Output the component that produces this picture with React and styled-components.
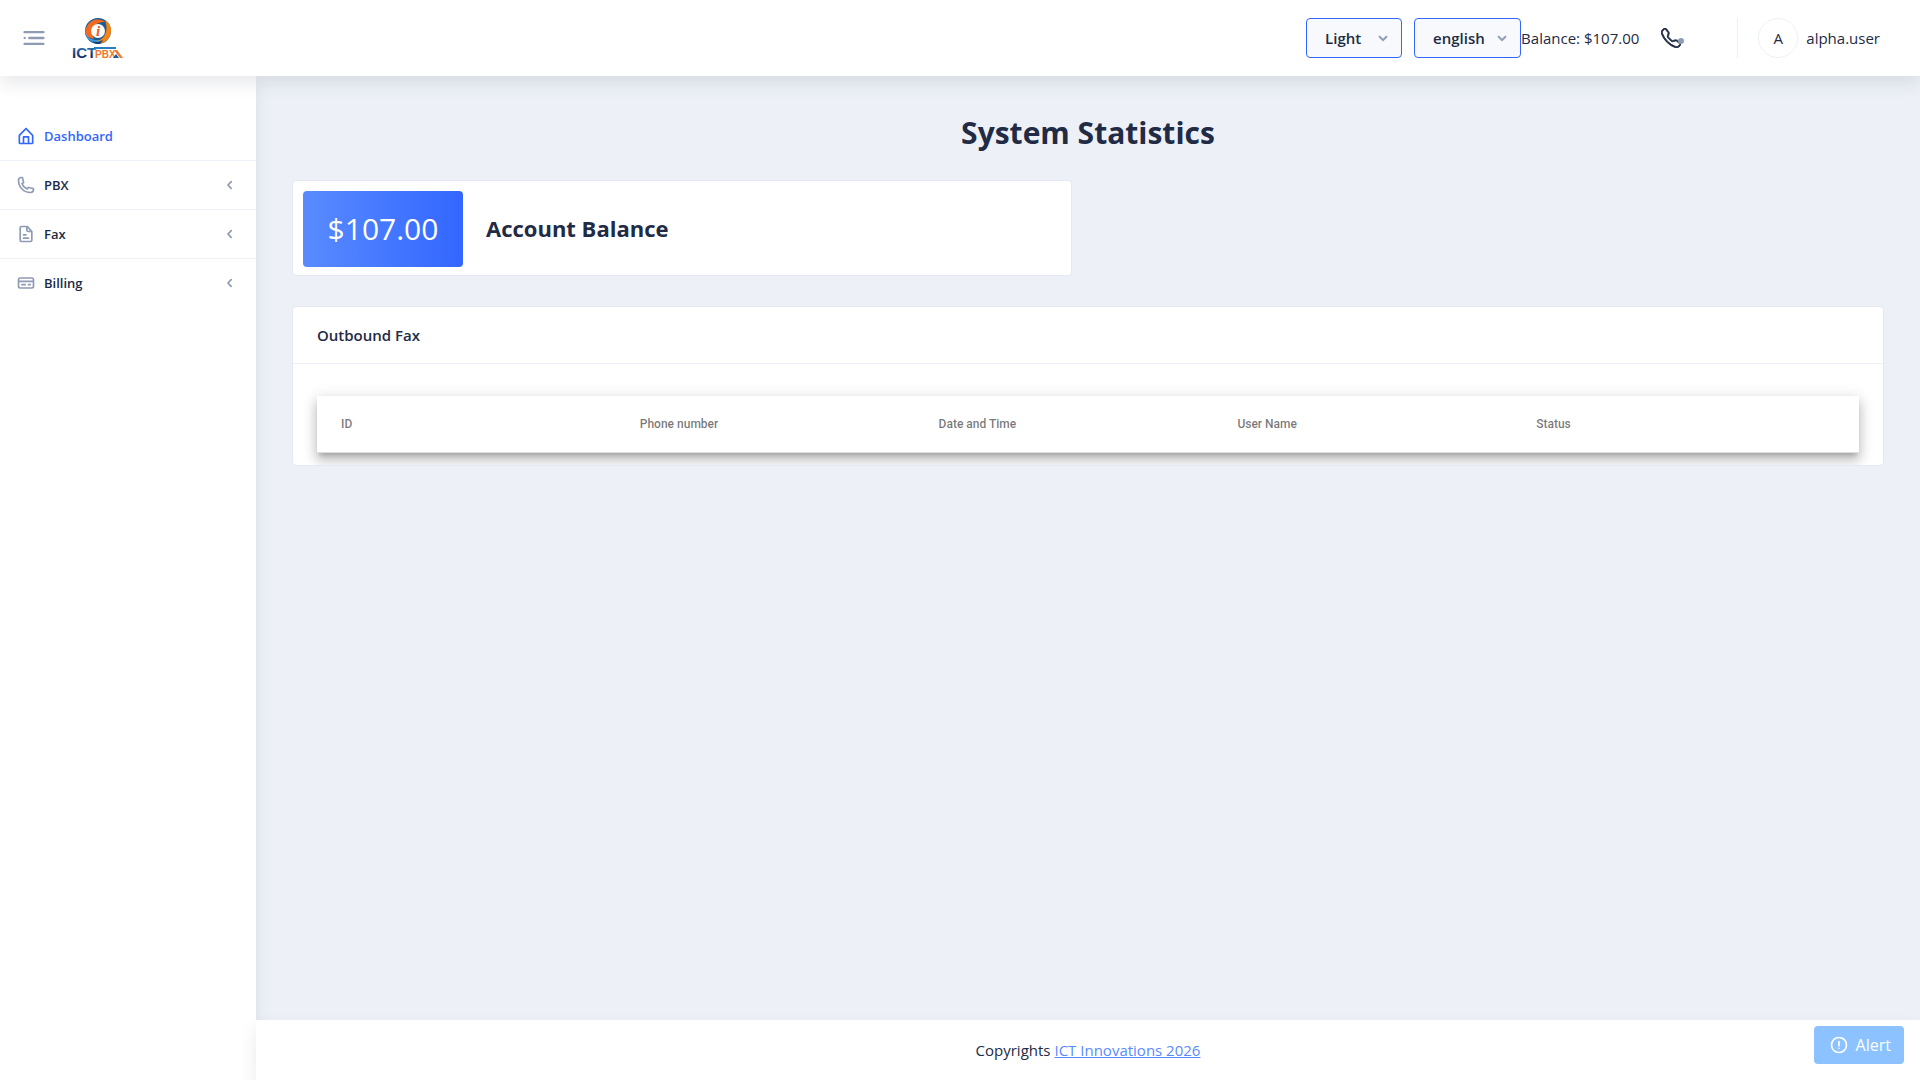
import React, { useState } from "react";
import styled, { createGlobalStyle } from "styled-components";
import { BsTelephone } from "react-icons/bs";

const GlobalStyle = createGlobalStyle`
  * {
    box-sizing: border-box;
  }
  body {
    margin: 0;
    background-color: #edf1f7;
    color: #222b45;
    font-family: "Open Sans", sans-serif;
    font-size: 15px;
    line-height: 24px;
  }
`;

const Layout = styled.div`
  min-height: 100vh;
  display: flex;
  flex-direction: column;
`;

const Header = styled.header`
  height: 76px;
  padding: 0 40px 0 20px;
  display: flex;
  align-items: center;
  justify-content: space-between;
  background-color: #ffffff;
  box-shadow: 0 8px 16px 0 rgba(44, 51, 73, 0.1);
  position: relative;
  z-index: 3;
`;

const HeaderGroup = styled.div`
  display: flex;
  align-items: center;
`;

const IconButton = styled.button`
  display: flex;
  align-items: center;
  padding: 0;
  border: none;
  background: none;
  color: ${(props) => props.$color || "#8f9bb3"};
  cursor: pointer;
  position: relative;
`;

const LogoLink = styled.a`
  display: flex;
  margin-left: 20px;
`;

const SelectWrapper = styled.label`
  display: flex;
  align-items: center;
  width: ${(props) => props.$width};
  margin-left: 12px;
  position: relative;
  svg {
    position: absolute;
    right: 9px;
    color: #8f9bb3;
    stroke: #8f9bb3;
    stroke-width: 0.6px;
    pointer-events: none;
  }
`;

const Select = styled.select`
  appearance: none;
  width: 100%;
  height: 40px;
  padding: 0 18px;
  border: 1px solid #3366ff;
  border-radius: 4px;
  background-color: #f7f9fc;
  color: #222b45;
  font-family: inherit;
  font-size: 15px;
  font-weight: 600;
  line-height: 24px;
`;

const PhoneButton = styled(IconButton)`
  margin-left: 22px;
  svg {
    stroke: #222b45;
    stroke-width: 0.6px;
  }
`;

const StatusDot = styled.span`
  width: 6px;
  height: 6px;
  border-radius: 50%;
  background-color: #8f9bb3;
  position: absolute;
  right: -3px;
  bottom: 4px;
`;

const User = styled.div`
  display: flex;
  align-items: center;
  gap: 8px;
  margin-left: 56px;
  padding-left: 20px;
  border-left: 1px solid #edf1f7;
`;

const Avatar = styled.div`
  width: 40px;
  height: 40px;
  display: flex;
  align-items: center;
  justify-content: center;
  border: 1px solid #edf1f7;
  border-radius: 50%;
`;

const Body = styled.div`
  flex: 1;
  display: flex;
`;

const Sidebar = styled.nav`
  width: 256px;
  flex-shrink: 0;
  padding-top: 36px;
  background-color: #ffffff;
  box-shadow: 0 8px 16px 0 rgba(44, 51, 73, 0.1);
`;

const MenuList = styled.ul`
  margin: 0;
  padding: 0;
  list-style: none;
`;

const MenuItem = styled.li`
  border-bottom: 1px solid #edf1f7;
  &:last-child {
    border-bottom: none;
  }
`;

const MenuLink = styled.a`
  height: 48px;
  padding: 0 16px;
  display: flex;
  align-items: center;
  gap: 8px;
  color: ${(props) => (props.$active ? "#3366ff" : "#222b45")};
  font-size: 13px;
  font-weight: 600;
  text-decoration: none;
  svg {
    color: ${(props) => (props.$active ? "#3366ff" : "#8f9bb3")};
  }
`;

const MenuTitle = styled.span`
  flex: 1;
`;

const Content = styled.div`
  flex: 1;
  display: flex;
  flex-direction: column;
`;

const Main = styled.main`
  flex: 1;
  padding: 36px 36px 32px;
`;

const PageTitle = styled.h3`
  margin: 0 0 26px;
  font-size: 30px;
  font-weight: 700;
  line-height: 42px;
  text-align: center;
`;

const CardGrid = styled.div`
  display: grid;
  grid-template-columns: 1fr 1fr;
  gap: 32px;
  margin-bottom: 30px;
`;

const Card = styled.section`
  border: 1px solid #e4e9f2;
  border-radius: 4px;
  background-color: #ffffff;
  overflow: hidden;
`;

const BalanceCard = styled(Card)`
  padding: 10px 10px 8px;
  display: flex;
  align-items: center;
  gap: 23px;
`;

const Amount = styled.div`
  width: 160px;
  height: 76px;
  display: flex;
  align-items: center;
  justify-content: center;
  border-radius: 4px;
  background-image: linear-gradient(to right, #598bff, #3366ff);
  color: #ffffff;
  font-size: 30px;
`;

const BalanceTitle = styled.h5`
  margin: 0;
  padding-bottom: 2px;
  font-size: 22px;
  font-weight: 700;
  line-height: 32px;
`;

const CardHeader = styled.header`
  padding: 16px 24px;
  border-bottom: 1px solid #edf1f7;
  font-weight: 600;
`;

const CardBody = styled.div`
  padding: 32px 24px 12px;
`;

const TableWrapper = styled.div`
  padding: 0 24px;
  border-bottom: 1px solid rgba(0, 0, 0, 0.12);
  background-color: #ffffff;
  box-shadow: 0 5px 5px -3px rgba(0, 0, 0, 0.2),
    0 8px 10px 1px rgba(0, 0, 0, 0.14), 0 3px 14px 2px rgba(0, 0, 0, 0.12);
`;

const Table = styled.table`
  width: 100%;
  table-layout: fixed;
  border-collapse: collapse;
`;

const HeadCell = styled.th`
  height: 56px;
  padding: 0;
  color: rgba(0, 0, 0, 0.54);
  font-family: Roboto, sans-serif;
  font-size: 12px;
  font-weight: 500;
  text-align: left;
`;

const Footer = styled.footer`
  height: 60px;
  display: flex;
  align-items: center;
  justify-content: center;
  gap: 4px;
  background-color: #ffffff;
  box-shadow: 0 8px 16px 0 rgba(44, 51, 73, 0.1);
`;

const FooterLink = styled.a`
  color: #598bff;
`;

const AlertButton = styled.button`
  height: 38px;
  padding: 0 13px 0 15px;
  display: flex;
  align-items: center;
  gap: 7px;
  border: none;
  border-radius: 4px;
  background-color: #8bc2ff;
  color: #ffffff;
  font-family: inherit;
  font-size: 16px;
  position: fixed;
  right: 16px;
  bottom: 16px;
  z-index: 4;
`;

const iconPaths = {
  home: "M20.42 10.18L12.71 2.3a1 1 0 0 0-1.42 0l-7.71 7.89A2 2 0 0 0 3 11.62V20a2 2 0 0 0 1.89 2h14.22A2 2 0 0 0 21 20v-8.38a2.07 2.07 0 0 0-.58-1.44zM10 20v-6h4v6zm9 0h-3v-7a1 1 0 0 0-1-1H9a1 1 0 0 0-1 1v7H5v-8.42l7-7.15 7 7.19z",
  phone:
    "M17.4 22A15.42 15.42 0 0 1 2 6.6 4.6 4.6 0 0 1 6.6 2a3.94 3.94 0 0 1 .77.07 3.79 3.79 0 0 1 .72.18 1 1 0 0 1 .65.75l1.37 6a1 1 0 0 1-.26.92c-.13.14-.14.15-1.37.79a9.91 9.91 0 0 0 4.87 4.89c.65-1.24.66-1.25.8-1.38a1 1 0 0 1 .92-.26l6 1.37a1 1 0 0 1 .72.65 4.34 4.34 0 0 1 .19.73 4.77 4.77 0 0 1 .06.76A4.6 4.6 0 0 1 17.4 22zM6.6 4A2.61 2.61 0 0 0 4 6.6 13.41 13.41 0 0 0 17.4 20a2.61 2.61 0 0 0 2.6-2.6v-.33L15.36 16l-.29.55c-.45.87-.78 1.5-1.62 1.16a11.85 11.85 0 0 1-7.18-7.21c-.36-.78.32-1.14 1.18-1.59L8 8.64 6.93 4z",
  file: "M15 16H9a1 1 0 0 0 0 2h6a1 1 0 0 0 0-2zM9 14h3a1 1 0 0 0 0-2H9a1 1 0 0 0 0 2zM19.74 8.33l-5.44-6a1 1 0 0 0-.74-.33h-7A2.53 2.53 0 0 0 4 4.5v15A2.53 2.53 0 0 0 6.56 22h10.88A2.53 2.53 0 0 0 20 19.5V9a1 1 0 0 0-.26-.67zM14 5l2.74 3h-2a.79.79 0 0 1-.74-.85zm3.44 15H6.56a.53.53 0 0 1-.56-.5v-15a.53.53 0 0 1 .56-.5H12v3.15A2.79 2.79 0 0 0 14.71 10H18v9.5a.53.53 0 0 1-.56.5z",
  card: "M19 5H5a3 3 0 0 0-3 3v8a3 3 0 0 0 3 3h14a3 3 0 0 0 3-3V8a3 3 0 0 0-3-3zM4 8a1 1 0 0 1 1-1h14a1 1 0 0 1 1 1v1H4zm16 8a1 1 0 0 1-1 1H5a1 1 0 0 1-1-1v-5h16zM7 15h4a1 1 0 0 0 0-2H7a1 1 0 0 0 0 2zM15 15h2a1 1 0 0 0 0-2h-2a1 1 0 0 0 0 2z",
  left: "M13.36 17a1 1 0 0 1-.72-.31l-3.86-4a1 1 0 0 1 0-1.4l4-4a1 1 0 1 1 1.42 1.42L10.9 12l3.18 3.3a1 1 0 0 1 0 1.41 1 1 0 0 1-.72.29z",
  down: "M12 15.5a1 1 0 0 1-.71-.29l-4-4a1 1 0 1 1 1.42-1.42L12 13.1l3.3-3.18a1 1 0 1 1 1.38 1.44l-4 3.86a1 1 0 0 1-.68.28z",
  menu: "M3 12a1 1 0 1 0 2 0a1 1 0 1 0-2 0zM7.9 11h12.2a1 1 0 0 1 0 2H7.9a1 1 0 0 1 0-2zM3.9 16h16.2a1 1 0 0 1 0 2H3.9a1 1 0 0 1 0-2zM3.9 6h16.2a1 1 0 0 1 0 2H3.9a1 1 0 0 1 0-2z",
  alert:
    "M12 2a10 10 0 1 0 10 10A10 10 0 0 0 12 2zm0 18a8 8 0 1 1 8-8 8 8 0 0 1-8 8zM11 16a1 1 0 1 0 2 0a1 1 0 1 0-2 0zM12 7a1 1 0 0 0-1 1v5a1 1 0 0 0 2 0V8a1 1 0 0 0-1-1z",
};

const Icon = ({ name, size = 20 }) => (
  <svg width={size} height={size} viewBox="0 0 24 24" fill="currentColor">
    <path d={iconPaths[name]} />
  </svg>
);

const Logo = () => (
  <svg width="60" height="50" viewBox="-4 -4 60 50">
    <defs>
      <linearGradient id="blue" x1="0" y1="0" x2="0" y2="1">
        <stop offset="0" stopColor="#2f8fd0" />
        <stop offset="0.7" stopColor="#12306b" />
      </linearGradient>
    </defs>
    <circle cx="26" cy="14" r="13" fill="#1c5c94" />
    <path d="M14 19a13 13 0 0 1 8-16c5-1 9 0 11 2c-6 0-11 2-12 8c-1 4 0 6 1 9c-4-1-6-2-8-3z" fill="#f26a21" />
    <path d="M33 3a13 13 0 0 1 6 11a13 13 0 0 1-10 12.600c-2 0-5-1-7-3c5 0 9-1 11-6c2-4 2-9 0-14.600z" fill="#fa8412" />
    <path d="M13 13c1 6 4 9 10 10c3 1 6 1 8 0c-2 2-4 3-6 3c-7-1-12-5-12-13z" fill="#3d9bd6" />
    <path d="M20 24c4 2 8 1 11-1c-1 2-2 3-4 4c-3 0-5-1-7-3z" fill="#143a75" />
    <circle cx="26" cy="14" r="7" fill="#ffffff" />
    <text
      x="26"
      y="19"
      textAnchor="middle"
      fill="#f05a22"
      fontFamily="Liberation Serif, serif"
      fontStyle="italic"
      fontWeight="700"
      fontSize="15"
    >
      i
    </text>
    <text
      x="0"
      y="41"
      fill="url(#blue)"
      fontFamily="Liberation Sans, sans-serif"
      fontWeight="700"
      fontSize="15"
    >
      ICT
    </text>
    <path d="M22 30h22v2H22z" fill="#2b7dbd" />
    <text
      x="23"
      y="41"
      fill="#f4772b"
      fontFamily="Liberation Sans, sans-serif"
      fontWeight="700"
      fontSize="10"
    >
      PBX
    </text>
    <path d="M42 33h3l6 8h-3z" fill="#f4772b" />
    <path d="M41 41l3-4 3 4z" fill="#1c5c94" />
  </svg>
);

const menuItems = [
  { title: "Dashboard", icon: "home", active: true },
  { title: "PBX", icon: "phone", expandable: true },
  { title: "Fax", icon: "file", expandable: true },
  { title: "Billing", icon: "card", expandable: true },
];

const columns = ["ID", "Phone number", "Date and Time", "User Name", "Status"];

const App = () => {
  const [theme, setTheme] = useState("Light");
  const [language, setLanguage] = useState("english");

  return (
    <Layout>
      <GlobalStyle />
      <Header>
        <HeaderGroup>
          <IconButton aria-label="Toggle menu">
            <Icon name="menu" size={28} />
          </IconButton>
          <LogoLink href="#" aria-label="ICTPBX">
            <Logo />
          </LogoLink>
        </HeaderGroup>
        <HeaderGroup>
          <SelectWrapper $width="96px">
            <Select
              aria-label="Theme"
              value={theme}
              onChange={(e) => setTheme(e.target.value)}
            >
              <option>Light</option>
              <option>Dark</option>
            </Select>
            <Icon name="down" />
          </SelectWrapper>
          <SelectWrapper $width="107px">
            <Select
              aria-label="Language"
              value={language}
              onChange={(e) => setLanguage(e.target.value)}
            >
              <option>english</option>
              <option>french</option>
            </Select>
            <Icon name="down" />
          </SelectWrapper>
          <span>Balance: $107.00</span>
          <PhoneButton aria-label="Phone" $color="#222b45">
            <BsTelephone size={20} />
            <StatusDot />
          </PhoneButton>
          <User>
            <Avatar>A</Avatar>
            <span>alpha.user</span>
          </User>
        </HeaderGroup>
      </Header>
      <Body>
        <Sidebar>
          <MenuList>
            {menuItems.map((item) => (
              <MenuItem key={item.title}>
                <MenuLink href="#" $active={item.active}>
                  <Icon name={item.icon} />
                  <MenuTitle>{item.title}</MenuTitle>
                  {item.expandable && <Icon name="left" />}
                </MenuLink>
              </MenuItem>
            ))}
          </MenuList>
        </Sidebar>
        <Content>
          <Main>
            <PageTitle>System Statistics</PageTitle>
            <CardGrid>
              <BalanceCard>
                <Amount>$107.00</Amount>
                <BalanceTitle>Account Balance</BalanceTitle>
              </BalanceCard>
            </CardGrid>
            <Card>
              <CardHeader>Outbound Fax</CardHeader>
              <CardBody>
                <TableWrapper>
                  <Table>
                    <thead>
                      <tr>
                        {columns.map((column) => (
                          <HeadCell key={column} scope="col">
                            {column}
                          </HeadCell>
                        ))}
                      </tr>
                    </thead>
                  </Table>
                </TableWrapper>
              </CardBody>
            </Card>
          </Main>
          <Footer>
            <span>Copyrights</span>
            <FooterLink href="#">ICT Innovations 2026</FooterLink>
          </Footer>
        </Content>
      </Body>
      <AlertButton>
        <Icon name="alert" />
        Alert
      </AlertButton>
    </Layout>
  );
};

export default App;
